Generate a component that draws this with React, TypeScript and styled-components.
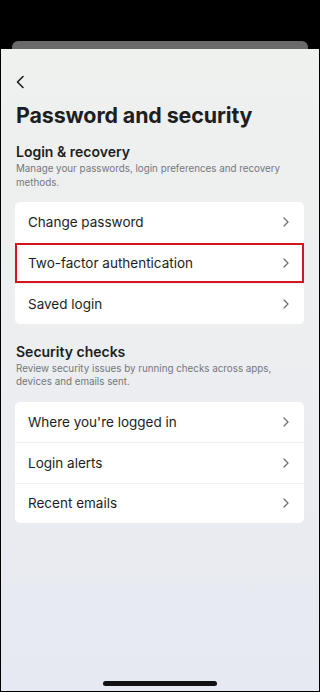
import React from 'react';
import styled, { createGlobalStyle } from 'styled-components';

type Section = {
  title: string;
  description: string;
  items: string[];
  highlighted?: string;
};

const sections: Section[] = [
  {
    title: 'Login & recovery',
    description: 'Manage your passwords, login preferences and recovery methods.',
    items: ['Change password', 'Two-factor authentication', 'Saved login'],
    highlighted: 'Two-factor authentication',
  },
  {
    title: 'Security checks',
    description: 'Review security issues by running checks across apps, devices and emails sent.',
    items: ["Where you're logged in", 'Login alerts', 'Recent emails'],
  },
];

const GlobalStyle = createGlobalStyle`
  html, body {
    margin: 0;
    padding: 0;
    background: #000;
  }
  body {
    font-family: Inter, Roboto, "Noto Sans", sans-serif;
    -webkit-font-smoothing: antialiased;
  }
`;

const Screen = styled.div`
  width: 320px;
  height: 692px;
  background: #000;
  display: flex;
  flex-direction: column;
  padding-top: 41px;
  box-sizing: border-box;
  overflow: hidden;
`;

const BackSheet = styled.div`
  height: 8px;
  margin: 0 12px;
  background: #6a6a6a;
  border-radius: 6px 6px 0 0;
`;

const Sheet = styled.div`
  flex: 1;
  margin: 0 1px 1px;
  background: linear-gradient(180deg, #eff1ef 0%, #eceef0 45%, #e6e9f1 100%);
  display: flex;
  flex-direction: column;
  padding: 0 14px;
`;

const BackButton = styled.button`
  align-self: flex-start;
  margin: 26px 0 0;
  padding: 0;
  border: 0;
  background: none;
  width: 12px;
  height: 14px;
  display: flex;
  svg {
    display: block;
  }
`;

const Title = styled.h1`
  margin: 12px 0 0 1px;
  font-size: 21.4px;
  line-height: 28px;
  font-weight: 700;
  color: #1c1e21;
  letter-spacing: -0.1px;
`;

const SectionBlock = styled.section`
  margin-top: 14px;
  & + & {
    margin-top: 19px;
  }
`;

const SectionTitle = styled.h2`
  margin: 0 0 0 1px;
  font-size: 14px;
  line-height: 18px;
  font-weight: 600;
  color: #1c1e21;
`;

const SectionText = styled.p`
  margin: 1px 0 0 1px;
  font-size: 9.8px;
  line-height: 13.5px;
  color: #74777c;
`;

const Card = styled.div`
  margin-top: 13px;
  background: #fff;
  border-radius: 5px;
  overflow: hidden;
  margin-right: 1px;
`;

const Row = styled.div<{ $highlighted?: boolean }>`
  height: 40.5px;
  display: flex;
  align-items: center;
  justify-content: space-between;
  padding: 0 15px 0 13px;
  box-sizing: border-box;
  font-size: 13.5px;
  color: #1c1e21;
  border-top: 1px solid #f0f0f0;
  &:first-child {
    border-top: 0;
  }
  ${p =>
    p.$highlighted &&
    `
    outline: 2px solid #d4161c;
    outline-offset: -2px;
  `}
`;

const Chevron = styled.svg`
  width: 6px;
  height: 10px;
  flex: none;
`;

const HomeIndicator = styled.div`
  margin: auto auto 5px;
  width: 114px;
  height: 5px;
  border-radius: 3px;
  background: #111;
`;

export default function App() {
  return (
    <>
      <GlobalStyle />
      <Screen>
        <BackSheet />
        <Sheet>
          <BackButton aria-label="Back">
            <svg width="12" height="14" viewBox="0 0 12 14">
              <path d="M8 1.5 2.5 7 8 12.5" fill="none" stroke="#1c1e21" strokeWidth="1.6" strokeLinecap="round" strokeLinejoin="round" />
            </svg>
          </BackButton>
          <Title>Password and security</Title>
          {sections.map(section => (
            <SectionBlock key={section.title}>
              <SectionTitle>{section.title}</SectionTitle>
              <SectionText>{section.description}</SectionText>
              <Card>
                {section.items.map(item => (
                  <Row key={item} $highlighted={item === section.highlighted}>
                    <span>{item}</span>
                    <Chevron viewBox="0 0 6 10">
                      <path d="M1 1l4 4-4 4" fill="none" stroke="#6b6e73" strokeWidth="1.2" strokeLinecap="round" strokeLinejoin="round" />
                    </Chevron>
                  </Row>
                ))}
              </Card>
            </SectionBlock>
          ))}
          <HomeIndicator />
        </Sheet>
      </Screen>
    </>
  );
}
